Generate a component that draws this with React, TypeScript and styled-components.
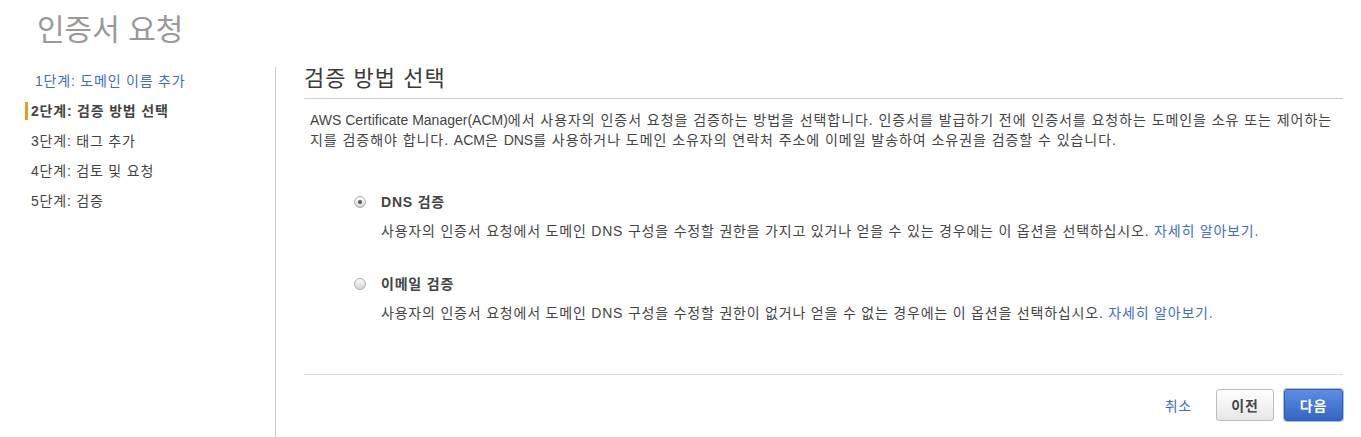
import React from "react";
import styled, { createGlobalStyle } from "styled-components";

const Global = createGlobalStyle`
  html, body { margin: 0; padding: 0; background: #fff; }
  body {
    font-family: "Liberation Sans", "Noto Sans CJK KR", sans-serif;
    color: #444;
    font-size: 14px;
  }
`;

const LINK = "#3f6dc6";

const Page = styled.div`
  width: 1361px;
  height: 437px;
  overflow: hidden;
`;

const PageTitle = styled.h1`
  margin: 0;
  padding: 10px 0 0 37px;
  height: 67px;
  box-sizing: border-box;
  font-size: 30px;
  font-weight: 400;
  color: #999;
  line-height: 40px;
`;

const Body = styled.div`
  display: flex;
  height: 370px;
`;

const Sidebar = styled.nav`
  width: 250px;
  margin-left: 25px;
  border-right: 1px solid #ccc;
  padding-top: 5px;
  display: flex;
  flex-direction: column;
  gap: 12px;
`;

const Step = styled.div<{ $active?: boolean; $link?: boolean }>`
  height: 18px;
  line-height: 18px;
  border-left: 3px solid ${(p) => (p.$active ? "#ec9a29" : "transparent")};
  padding-left: ${(p) => (p.$link ? "7px" : "3px")};
  font-size: 14px;
  letter-spacing: 0.8px;
  font-weight: ${(p) => (p.$active ? 700 : 400)};
  color: ${(p) => (p.$link ? LINK : "#444")};
  white-space: nowrap;
`;

const Main = styled.main`
  flex: 1;
  padding: 0 18px 0 28px;
  display: flex;
  flex-direction: column;
`;

const SectionTitle = styled.h2`
  margin: 0;
  font-size: 22px;
  font-weight: 400;
  letter-spacing: 1px;
  color: #3a3a3a;
  line-height: 24px;
  padding-bottom: 7px;
  border-bottom: 1px solid #ccc;
`;

const Intro = styled.p`
  margin: 11px 6px 0 6px;
  font-size: 14px;
  line-height: 20px;
  letter-spacing: 0.95px;
  color: #444;
`;

const Latin = styled.span`
  letter-spacing: 0;
`;

const Options = styled.div`
  margin-top: 43px;
  padding-left: 50px;
  display: flex;
  flex-direction: column;
  gap: 35px;
`;

const Option = styled.label`
  display: grid;
  grid-template-columns: 27px 1fr;
  row-gap: 11px;
  align-items: center;
`;

const Radio = styled.span<{ $checked?: boolean }>`
  width: 12px;
  height: 12px;
  border-radius: 50%;
  border: 1px solid #adadad;
  background: linear-gradient(#fbfbfb, #d6d6d6);
  display: flex;
  align-items: center;
  justify-content: center;
  box-sizing: border-box;
  &::after {
    content: "";
    width: 4px;
    height: 4px;
    border-radius: 50%;
    background: ${(p) => (p.$checked ? "#555" : "transparent")};
  }
`;

const OptionLabel = styled.span`
  font-weight: 700;
  color: #444;
  font-size: 14px;
  line-height: 18px;
  letter-spacing: 0.8px;
`;

const OptionDesc = styled.span`
  grid-column: 2;
  font-size: 14px;
  line-height: 18px;
  letter-spacing: 0.8px;
  color: #444;
`;

const Link = styled.a`
  color: ${LINK};
  text-decoration: none;
`;

const Footer = styled.div`
  margin-top: 52px;
  border-top: 1px solid #ddd;
  padding-top: 14px;
  display: flex;
  justify-content: flex-end;
  align-items: center;
  gap: 10px;
`;

const CancelLink = styled.a`
  color: ${LINK};
  font-size: 14px;
  letter-spacing: 0.8px;
  margin-right: 14px;
  text-decoration: none;
`;

const Button = styled.button<{ $primary?: boolean }>`
  height: 32px;
  width: ${(p) => (p.$primary ? "59px" : "58px")};
  padding: 0;
  border-radius: 3px;
  font-family: inherit;
  font-size: 14px;
  letter-spacing: 0.8px;
  font-weight: 700;
  cursor: pointer;
  border: 1px solid ${(p) => (p.$primary ? "#3159ad" : "#bdbdbd")};
  color: ${(p) => (p.$primary ? "#fff" : "#444")};
  background: ${(p) =>
    p.$primary
      ? "linear-gradient(#5b8ee4, #3565c3)"
      : "linear-gradient(#ffffff, #e7e7e7)"};
  box-shadow: ${(p) => (p.$primary ? "0 0 0 1px #a9c1ee" : "none")};
`;

export default function App() {
  return (
    <Page>
      <Global />
      <PageTitle>인증서 요청</PageTitle>
      <Body>
        <Sidebar>
          <Step $link>1단계: 도메인 이름 추가</Step>
          <Step $active>2단계: 검증 방법 선택</Step>
          <Step>3단계: 태그 추가</Step>
          <Step>4단계: 검토 및 요청</Step>
          <Step>5단계: 검증</Step>
        </Sidebar>
        <Main>
          <SectionTitle>검증 방법 선택</SectionTitle>
          <Intro>
            <Latin>AWS Certificate Manager(ACM)</Latin>에서 사용자의 인증서 요청을 검증하는 방법을 선택합니다. 인증서를 발급하기 전에 인증서를 요청하는 도메인을 소유 또는 제어하는지를 검증해야 합니다. <Latin>ACM</Latin>은 <Latin>DNS</Latin>를 사용하거나 도메인 소유자의 연락처 주소에 이메일 발송하여 소유권을 검증할 수 있습니다.
          </Intro>
          <Options>
            <Option>
              <Radio $checked />
              <OptionLabel>DNS 검증</OptionLabel>
              <OptionDesc>
                사용자의 인증서 요청에서 도메인 DNS 구성을 수정할 권한을 가지고 있거나 얻을 수 있는 경우에는 이 옵션을 선택하십시오.{" "}
                <Link href="#">자세히 알아보기.</Link>
              </OptionDesc>
            </Option>
            <Option>
              <Radio />
              <OptionLabel>이메일 검증</OptionLabel>
              <OptionDesc>
                사용자의 인증서 요청에서 도메인 DNS 구성을 수정할 권한이 없거나 얻을 수 없는 경우에는 이 옵션을 선택하십시오.{" "}
                <Link href="#">자세히 알아보기.</Link>
              </OptionDesc>
            </Option>
          </Options>
          <Footer>
            <CancelLink href="#">취소</CancelLink>
            <Button>이전</Button>
            <Button $primary>다음</Button>
          </Footer>
        </Main>
      </Body>
    </Page>
  );
}
